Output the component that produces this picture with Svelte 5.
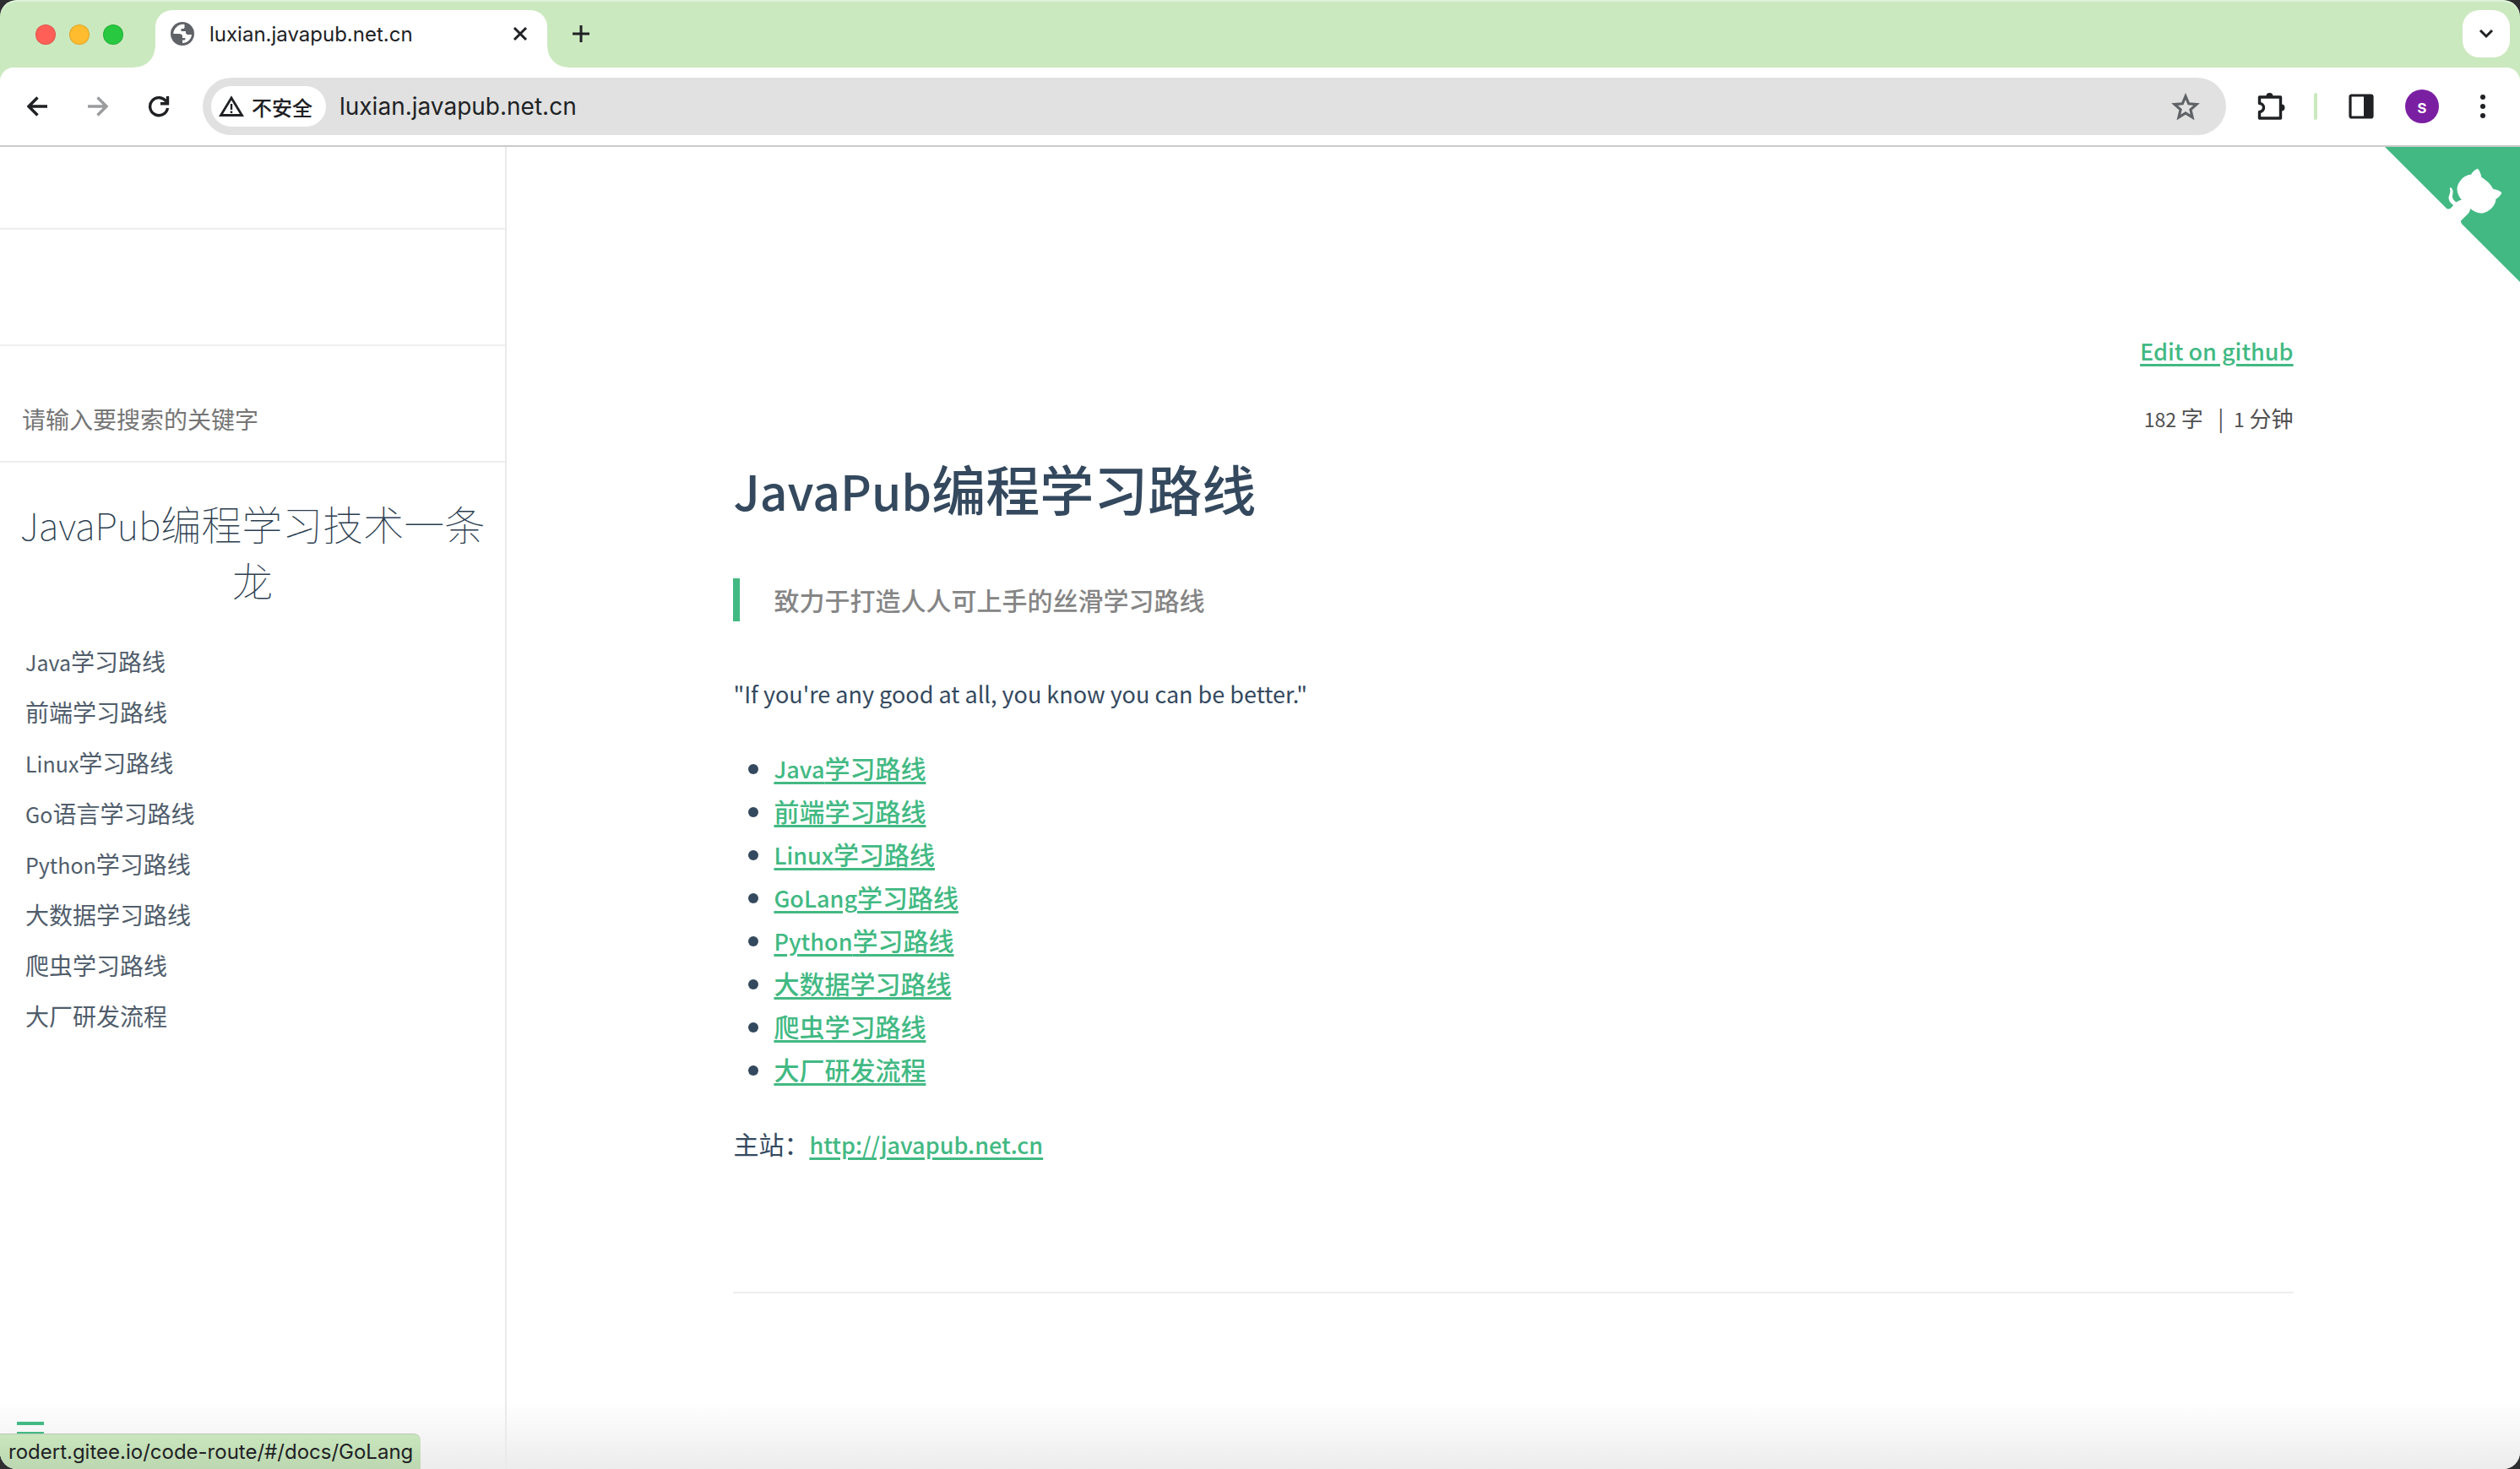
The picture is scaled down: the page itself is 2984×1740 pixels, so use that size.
<script>
  const routes = ['Java学习路线', '前端学习路线', 'Linux学习路线', 'Go语言学习路线', 'Python学习路线', '大数据学习路线', '爬虫学习路线', '大厂研发流程'];
  const links = routes.map((r) => r.replace('Go语言', 'GoLang'));

  // Splits a mixed string into its leading Latin part and the Chinese rest.
  const parts = (s) => {
    const [latin] = s.match(/^[A-Za-z]*/);
    return { latin, han: s.slice(latin.length) };
  };
</script>

{#snippet mixed(s)}
  {@const p = parts(s)}{#if p.latin}<span class="latin">{p.latin}</span>{/if}{p.han}
{/snippet}

<div class="window">
  <header>
    <div class="strip">
      <div class="lights"><i class="red"></i><i class="amber"></i><i class="green"></i></div>
      <div class="tab">
        <svg class="globe" viewBox="0 0 28 28" width="28" height="28" aria-hidden="true">
          <circle cx="14" cy="14" r="14" fill="#5f6368" />
          <path d="M16.500 3C10 2 4 7 3.200 14H10c2.500 0 4 .8 4 3v2h2.500c.6 0 1 .4 1 1s-.4 1.500-1 1.500H14V25c6 0 10.500-4.500 11-10h-4.500c-1.500 0-2.500-1-2.500-2.500V11h-5.500V8H15c1 0 1.500-.6 1.500-1.500z" fill="#fff" />
        </svg>
        <span>luxian.javapub.net.cn</span>
        <button class="close" aria-label="关闭标签页">
          <svg viewBox="0 0 18 18" width="18" height="18"><path d="M2 2l14 14M16 2L2 16" stroke="#202124" stroke-width="3" /></svg>
        </button>
      </div>
      <button class="add" aria-label="新标签页">
        <svg viewBox="0 0 20 20" width="20" height="20"><path d="M10 0v20M0 10h20" stroke="#202124" stroke-width="3" /></svg>
      </button>
      <button class="tabsearch" aria-label="搜索标签页">
        <svg viewBox="0 0 18 12" width="18" height="12"><path d="M2 2l7 7 7-7" fill="none" stroke="#202124" stroke-width="3" /></svg>
      </button>
    </div>
    <div class="toolbar">
      <button class="tool" aria-label="后退">
        <svg viewBox="0 0 24 24" width="24" height="24"><path d="M24 12H2M12.500 1.500L2 12l10.500 10.500" fill="none" stroke="#202124" stroke-width="3.400" /></svg>
      </button>
      <button class="tool" aria-label="前进">
        <svg viewBox="0 0 24 24" width="24" height="24"><path d="M0 12h22M11.500 1.500L22 12 11.500 22.500" fill="none" stroke="#9b9c9d" stroke-width="3.400" /></svg>
      </button>
      <button class="tool" aria-label="重新加载">
        <svg viewBox="0 0 26 26" width="26" height="26"><path d="M22 7.500A10.500 10.500 0 1 0 23.500 15" fill="none" stroke="#202124" stroke-width="3.400" /><path d="M23.500 1v8.700H15" fill="none" stroke="#202124" stroke-width="3.400" /></svg>
      </button>
      <div class="address">
        <button class="chip">
          <svg viewBox="0 0 30 26" width="30" height="26"><path d="M15 3L27.500 23.500h-25z" fill="none" stroke="#202124" stroke-width="2.800" /><path d="M15 10v7M15 18.500v2.500" stroke="#202124" stroke-width="2.400" /></svg>
          不安全
        </button>
        <input aria-label="地址" value="luxian.javapub.net.cn" />
        <button class="star" aria-label="收藏">
          <svg viewBox="0 0 34 32" width="34" height="32"><path d="M17 4l3.700 8.800 9.300.8-7.100 6.200 2.200 9.200-8.100-5-8.100 5 2.200-9.200L4 13.600l9.300-.8z" fill="none" stroke="#5f6368" stroke-width="3.200" /></svg>
        </button>
      </div>
      <button class="ext" aria-label="扩展程序">
        <svg viewBox="0 0 34 34" width="34" height="34"><path d="M3.500 6h25v25h-25v-7.500a5 5 0 0 0 0-10z" fill="none" stroke="#202124" stroke-width="3.400" stroke-linejoin="round" /><path d="M11.500 5a4 4 0 0 1 8 0zM29.500 14.500a4 4 0 0 1 0 8z" fill="#202124" /></svg>
      </button>
      <i class="divider"></i>
      <button class="panel" aria-label="侧边栏">
        <svg viewBox="0 0 30 30" width="30" height="30"><rect x="2" y="2" width="26" height="26" rx="1.500" fill="none" stroke="#202124" stroke-width="3.200" /><path d="M18 2h10v26H18z" fill="#202124" /></svg>
      </button>
      <button class="avatar">s</button>
      <button class="menu" aria-label="菜单">
        <svg viewBox="0 0 8 28" width="8" height="28"><g fill="#202124"><circle cx="4" cy="3" r="3" /><circle cx="4" cy="14" r="3" /><circle cx="4" cy="25" r="3" /></g></svg>
      </button>
    </div>
  </header>

  <div class="page">
    <aside>
      <div class="blank first"></div>
      <div class="blank"></div>
      <div class="search"><input type="search" aria-label="搜索" placeholder="请输入要搜索的关键字" /></div>
      <h2><a href="#/">{@render mixed('JavaPub编程学习技术一条龙')}</a></h2>
      <nav>
        <ul>
          {#each routes as r}<li><a href="#/docs">{@render mixed(r)}</a></li>{/each}
        </ul>
      </nav>
      <button class="toggle" aria-label="切换侧边栏"><i></i><i></i></button>
      <div class="status">rodert.gitee.io/code-route/#/docs/GoLang</div>
    </aside>
    <main>
      <a class="corner" href="#/github" aria-label="View source on Github">
        <svg viewBox="0 0 250 250" width="160" height="160">
          <path d="M0,0 L115,115 L130,115 L142,142 L250,250 L250,0 Z" fill="#42b983" />
          <path d="M128.300,109 C113.800,99.700 119,89.600 119,89.600 C122,82.700 120.500,78.600 120.500,78.600 C119.200,72 123.400,76.300 123.400,76.300 C127.300,80.900 125.500,87.300 125.500,87.300 C122.900,97.600 130.600,101.900 134.400,103.200" fill="#fff" />
          <path d="M115,115 C114.900,115.100 118.700,116.500 119.800,115.400 L133.700,101.600 C136.900,99.200 139.900,98.400 142.200,98.600 C133.800,88 127.500,74.400 143.800,58 C148.500,53.400 154,51.200 159.700,51 C160.300,49.400 163.200,43.600 171.400,40.100 C171.400,40.100 176.100,42.500 178.800,56.200 C183.100,58.600 187.200,61.800 190.900,65.400 C194.500,69 197.700,73.200 200.100,77.600 C213.800,80.200 216.300,84.900 216.300,84.900 C212.700,93.100 206.900,96 205.400,96.600 C205.100,102.400 203,107.800 198.300,112.500 C181.900,128.900 168.300,122.500 157.700,114.100 C157.900,116.900 156.700,120.900 152.700,124.900 L141,136.500 C139.800,137.700 141.600,141.900 141.800,141.800 Z" fill="#fff" />
        </svg>
      </a>
      <article>
        <p class="edit"><a class="latin" href="#/edit">Edit on github</a></p>
        <p class="count"><span class="latin">182</span> 字&nbsp;&nbsp; | &nbsp;<span class="latin">1</span> 分钟</p>
        <h1>{@render mixed('JavaPub编程学习路线')}</h1>
        <blockquote>致力于打造人人可上手的丝滑学习路线</blockquote>
        <p class="quote">"If you're any good at all, you know you can be better."</p>
        <ul>
          {#each links as l}<li><a href="#/docs">{@render mixed(l)}</a></li>{/each}
        </ul>
        <p>主站：<a class="latin" href="http://javapub.net.cn">http://javapub.net.cn</a></p>
        <hr />
      </article>
    </main>
  </div>
</div>

<style>
  :global(body) { background: #2e2e30; }
  .window { min-height: 100vh; display: flex; flex-direction: column; font-family: "Noto Sans CJK SC", sans-serif; color: #34495e; background: #cbe9bf; border-radius: 20px; overflow: hidden; }
  button { border: 0; background: none; padding: 0; font: inherit; color: inherit; display: flex; align-items: center; justify-content: center; }
  input { border: 0; background: none; padding: 0; outline: 0; font: inherit; color: inherit; min-width: 0; }
  svg { display: block; }
  ul { margin: 0; padding: 0; }
  p { margin: 0; }
  .latin { line-height: 1; }

  .strip { height: 80px; box-sizing: border-box; padding: 12px 12px 0 42px; display: flex; align-items: flex-start; font-family: Inter, sans-serif; color: #202124; border-radius: 20px 20px 0 0; box-shadow: inset 0 2px #e0f2d9; }
  .lights { display: flex; gap: 16px; padding-top: 17px; margin-right: 38px; }
  .lights i { width: 24px; height: 24px; border-radius: 50%; box-sizing: border-box; border: 1px solid rgba(0, 0, 0, .12); }
  .red { background: #ff5f57; }
  .amber { background: #febc2e; }
  .green { background: #28c840; }
  .tab { position: relative; width: 464px; height: 68px; box-sizing: border-box; padding: 0 23px 12px 18px; display: flex; align-items: center; gap: 18px; background: #fff; border-radius: 20px 20px 0 0; font-size: 24px; }
  .tab::before, .tab::after { content: ""; position: absolute; bottom: 0; width: 24px; height: 24px; }
  .tab::before { right: 100%; background: radial-gradient(circle at 0 0, transparent 23px, #fff 24px); }
  .tab::after { left: 100%; background: radial-gradient(circle at 100% 0, transparent 23px, #fff 24px); }
  .close { margin-left: auto; }
  .add { margin: 18px 0 0 30px; }
  .tabsearch { width: 56px; height: 56px; margin-left: auto; border-radius: 20px; background: #fff; }

  .toolbar { height: 92px; border-bottom: 2px solid #cbcbcb; display: flex; align-items: center; background: #fff; border-radius: 16px 16px 0 0; padding: 0 40px 0 8px; color: #202124; }
  .tool { width: 72px; height: 68px; }
  .address { flex: 1; height: 68px; margin-left: 16px; box-sizing: border-box; padding: 0 31px 0 10px; display: flex; align-items: center; border-radius: 34px; background: #e1e1e1; font-family: Inter, sans-serif; font-size: 28px; }
  .address input { flex: 1; padding-left: 16px; }
  .chip { height: 48px; padding: 0 16px 0 9px; gap: 9px; border-radius: 24px; background: #fff; font-family: "Noto Sans CJK SC", sans-serif; font-size: 24px; font-weight: 500; }
  .ext { margin-left: 36px; }
  .divider { width: 4px; height: 32px; border-radius: 2px; margin: 0 37px 0 34px; background: #cbe9bf; }
  .avatar { width: 40px; height: 40px; margin: 0 48px 0 37px; border-radius: 50%; background: #7b1fa2; color: #fff; font-family: Roboto, sans-serif; font-size: 22px; font-weight: 500; }

  .page { flex: 1; display: flex; background: linear-gradient(#fff, #fff calc(100% - 80px), #ececec); }
  aside { position: relative; width: 600px; box-sizing: border-box; border-right: 2px solid #eaeaea; flex: none; }
  .blank { height: 136px; border-bottom: 2px solid #eee; }
  .first { height: 96px; }
  .search { height: 136px; border-bottom: 2px solid #eee; display: flex; align-items: center; padding: 0 26px; }
  .search input { flex: 1; font-size: 28px; padding-top: 36px; }
  .search input::placeholder { color: #757575; opacity: 1; }
  h2 { margin: 38px 0 0; padding: 0 20px; text-align: center; font-size: 48px; line-height: 67px; font-weight: 100; }
  h2 a { color: #2c3e50; text-decoration: none; }
  h2 .latin { font-size: 44px; }
  nav { padding: 33px 30px; }
  nav li { list-style: none; font-size: 28px; line-height: 60px; }
  nav a { color: #505d6b; text-decoration: none; }
  nav .latin { font-size: 25px; }
  .toggle { position: absolute; left: 20px; bottom: 40px; flex-direction: column; gap: 8px; }
  .toggle i { width: 32px; height: 4px; background: #42b983; }
  .status { position: absolute; left: 0; bottom: 0; height: 41px; line-height: 42px; padding: 0 9px 0 10px; border-top: 1px solid #bcc8b7; border-radius: 0 8px 0 0; background: linear-gradient(#c9e6bd, #bcd7b1); color: #202124; font-family: Inter, sans-serif; font-size: 24px; white-space: nowrap; }

  main { position: relative; flex: 1; min-width: 0; }
  .corner { position: absolute; top: 0; right: 0; }
  article { width: 80%; box-sizing: border-box; margin: 0 auto; padding: 215px 30px 80px; font-size: 30px; line-height: 51px; }
  article a { color: #42b983; font-weight: 500; text-decoration-thickness: 3px; text-underline-offset: 4px; }
  article .latin, .quote { font-size: 27px; }
  .edit, .count { text-align: right; }
  .count { margin-top: 29px; font-size: 26px; color: #505050; }
  .count .latin { font-size: 23px; }
  h1 { margin: 10px 0 0; font-size: 64px; line-height: 94px; font-weight: 500; }
  h1 .latin { font-size: 57px; }
  blockquote { margin: 61px 0 60px; border-left: 8px solid #42b983; padding-left: 40px; color: #858585; font-weight: 500; }
  article ul { margin: 37px 0; padding-left: 48px; }
  hr { border: 0; border-top: 2px solid #eee; margin: 150px 0 0; }
</style>
